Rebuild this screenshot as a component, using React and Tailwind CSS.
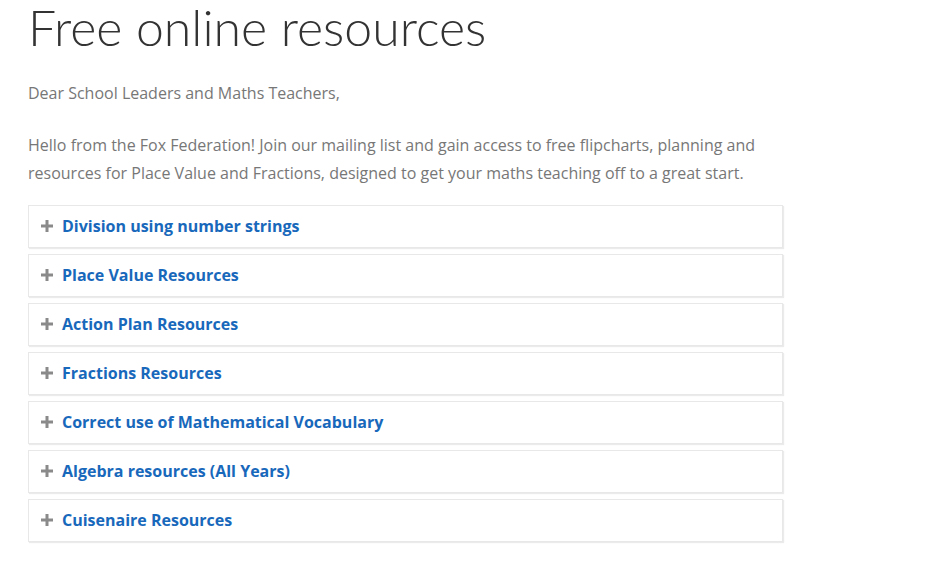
const ITEMS = [
  "Division using number strings",
  "Place Value Resources",
  "Action Plan Resources",
  "Fractions Resources",
  "Correct use of Mathematical Vocabulary",
  "Algebra resources (All Years)",
  "Cuisenaire Resources",
];

function PlusIcon() {
  return (
    <svg width="12" height="12" viewBox="0 0 12 12" className="shrink-0">
      <rect x="4.5" y="0" width="3" height="12" fill="#8a8a8a" />
      <rect x="0" y="4.5" width="12" height="3" fill="#8a8a8a" />
    </svg>
  );
}

export default function App() {
  return (
    <div className="min-h-[576px] w-[926px] bg-white pl-[28px] font-['Open_Sans',sans-serif]">
      <h1 className="font-['Lato',sans-serif] text-[50px] font-light leading-[54px] text-[#333]">
        Free online resources
      </h1>

      <p className="mt-[25px] text-[16px] leading-[28px] text-[#777]">
        Dear School Leaders and Maths Teachers,
      </p>
      <p className="mt-[24px] w-[740px] text-[16px] leading-[28px] text-[#777]">
        Hello from the Fox Federation! Join our mailing list and gain access to free flipcharts, planning and
        resources for Place Value and Fractions, designed to get your maths teaching off to a great start.
      </p>

      {/* accordion */}
      <div className="mt-[18px] flex w-[755px] flex-col gap-[6px]">
        {ITEMS.map((t) => (
          <div
            key={t}
            className="flex h-[43px] items-center gap-[9px] border border-[#e8e8e8] pb-[1px] pl-[12px] shadow-[1px_1px_1px_rgba(0,0,0,0.08)]"
          >
            <PlusIcon />
            <span className="text-[16px] font-bold text-[#1868bb]">{t}</span>
          </div>
        ))}
      </div>
    </div>
  );
}
